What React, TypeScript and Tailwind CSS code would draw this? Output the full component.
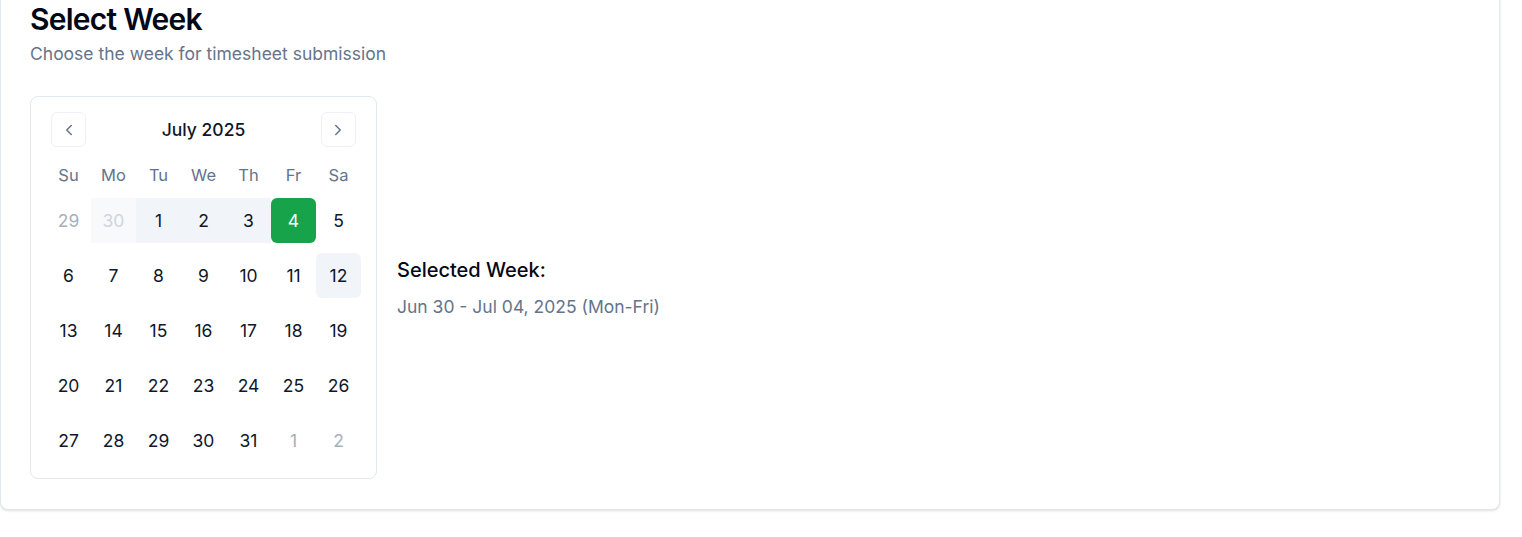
import React from 'react';
import { ChevronLeft, ChevronRight } from 'lucide-react';

type Day = {
  n: number;
  outside?: boolean;
  inRange?: boolean;
  selected?: boolean;
  today?: boolean;
};

const weekdays = ['Su', 'Mo', 'Tu', 'We', 'Th', 'Fr', 'Sa'];

const buildWeeks = (): Day[][] => {
  const days: Day[] = [
    { n: 29, outside: true },
    { n: 30, outside: true, inRange: true },
  ];
  for (let i = 1; i <= 31; i++) {
    days.push({
      n: i,
      inRange: i >= 1 && i <= 3,
      selected: i === 4,
      today: i === 12,
    });
  }
  days.push({ n: 1, outside: true }, { n: 2, outside: true });
  const weeks: Day[][] = [];
  for (let i = 0; i < days.length; i += 7) weeks.push(days.slice(i, i + 7));
  return weeks;
};

const dayClass = (d: Day) => {
  if (d.selected) return 'bg-[#16a34a] text-white rounded-md';
  if (d.outside && d.inRange) return 'bg-[#f7f9fb] text-[#cfd5dd]';
  if (d.outside) return 'text-[#a8b0bb]';
  if (d.inRange) return 'bg-[#f1f5f9] text-[#0f172a]';
  if (d.today) return 'bg-[#f1f5f9] text-[#0f172a] rounded-md';
  return 'text-[#0f172a]';
};

const Calendar: React.FC = () => {
  const weeks = buildWeeks();
  return (
    <div className="border border-[#e2e8f0] rounded-lg p-[15px] w-[347px] shrink-0">
      <div className="flex items-center justify-between h-[35px] px-[5px]">
        <button className="w-[35px] h-[35px] rounded-md border border-[#eef1f5] flex items-center justify-center text-[#64748b]">
          <ChevronLeft className="w-[18px] h-[18px]" strokeWidth={2} />
        </button>
        <span className="pt-[2px] text-[17.5px] font-medium text-[#0f172a]">July 2025</span>
        <button className="w-[35px] h-[35px] rounded-md border border-[#eef1f5] flex items-center justify-center text-[#64748b]">
          <ChevronRight className="w-[18px] h-[18px]" strokeWidth={2} />
        </button>
      </div>

      <div className="grid grid-cols-7 mt-[15px] h-[26px] items-center">
        {weekdays.map((w) => (
          <span key={w} className="text-center text-[16.5px] text-[#64748b]">
            {w}
          </span>
        ))}
      </div>

      <div className="flex flex-col gap-[10px] mt-[10px]">
        {weeks.map((week, wi) => (
          <div key={wi} className="grid grid-cols-7">
            {week.map((d, di) => (
              <div
                key={di}
                className={`h-[45px] pt-[2px] flex items-center justify-center text-[17.5px] ${dayClass(d)}`}
              >
                {d.n}
              </div>
            ))}
          </div>
        ))}
      </div>
    </div>
  );
};

export default function App() {
  return (
    <div className="min-h-screen bg-white font-['Inter',sans-serif] overflow-hidden">
      <div className="w-[1500px] -mt-[30px] pt-[30px] pb-[30px] pl-[29px] border border-[#e2e8f0] rounded-lg bg-white shadow-sm">
        <h1 className="text-[30px] leading-[36px] font-semibold text-[#020817] tracking-tight">
          Select Week
        </h1>
        <p className="mt-[5px] text-[17.5px] leading-[24px] text-[#64748b]">
          Choose the week for timesheet submission
        </p>

        <div className="mt-[30px] flex items-center gap-5">
          <Calendar />
          <div className="flex flex-col gap-[13px] pt-[2px]">
            <span className="text-[20px] font-medium text-[#020817] leading-[24px]">Selected Week:</span>
            <span className="text-[17.5px] text-[#64748b] leading-[24px]">
              Jun 30 - Jul 04, 2025 (Mon-Fri)
            </span>
          </div>
        </div>
      </div>
    </div>
  );
}
